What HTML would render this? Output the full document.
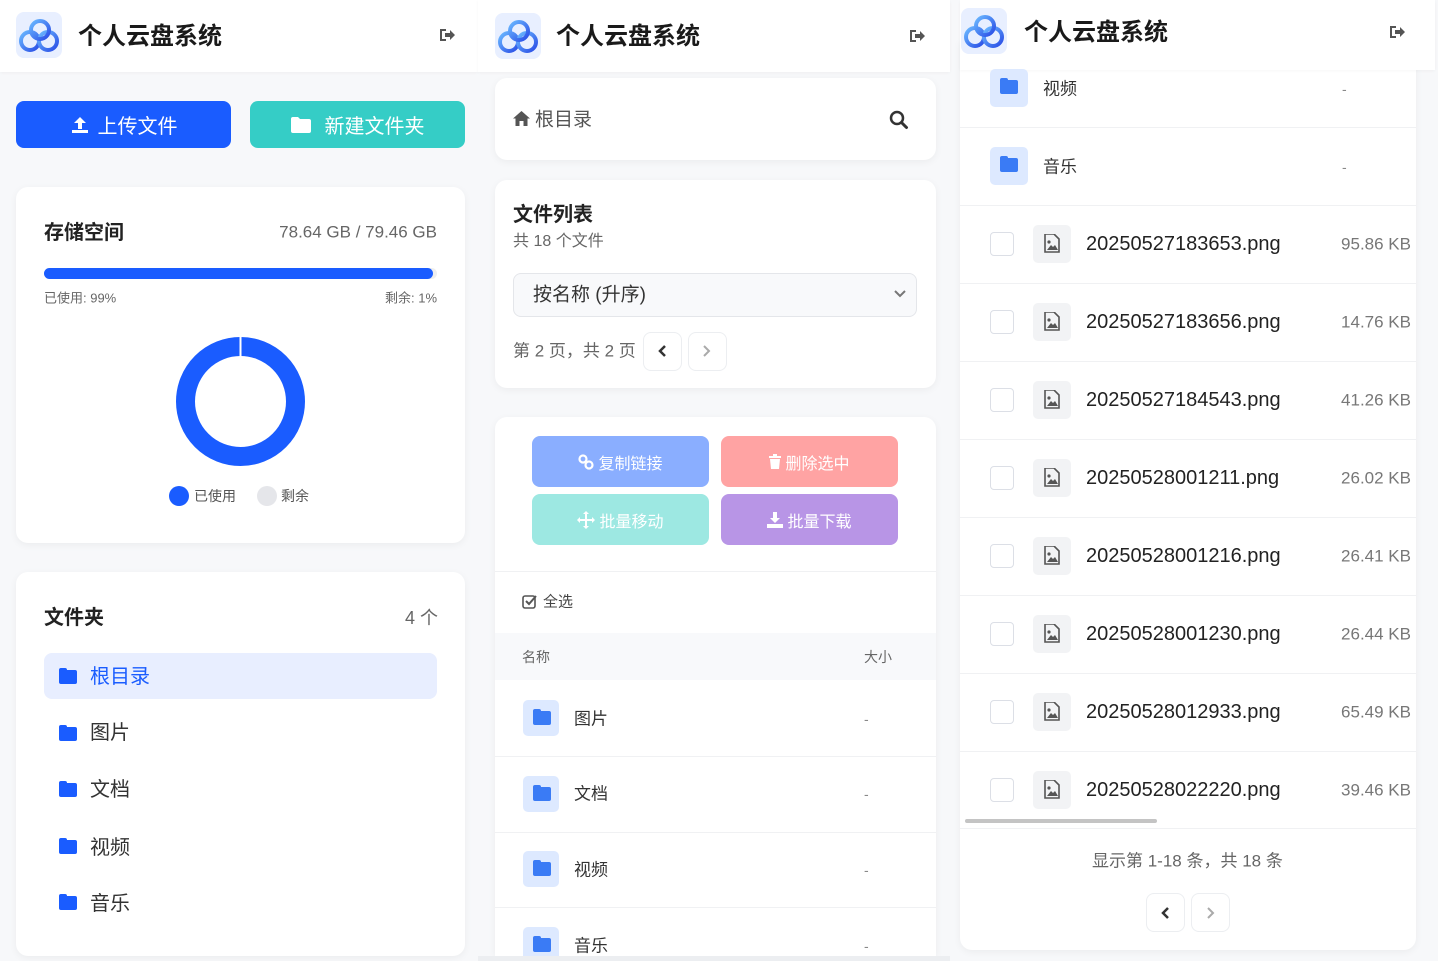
<!DOCTYPE html>
<html style="overflow:hidden;height:961px"><head><meta charset="utf-8"><style>
*{margin:0;padding:0;box-sizing:border-box}
body{width:1438px;height:961px;background:#f7f8fa;position:relative;overflow:hidden;font-family:"Liberation Sans","Noto Sans CJK SC",sans-serif;color:#222}
.a{position:absolute}
.t{position:absolute;transform:translateY(-50%);white-space:nowrap;line-height:1}
.card{position:absolute;background:#fff;border-radius:12px;box-shadow:0 2px 8px rgba(0,0,0,.05)}
.hdr{position:absolute;top:0;background:#fff;height:72px;box-shadow:0 1px 3px rgba(0,0,0,.04)}
.title{font-size:24px;font-weight:bold;color:#1a1a1a}
.btn{position:absolute;border-radius:8px;color:#fff;display:flex;align-items:center;justify-content:center;gap:8px}
.fi{position:absolute;width:36px;height:36px;background:#dde9ff;border-radius:5px}
.fi:after{content:"";position:absolute;left:10px;top:11px;width:18px;height:14px;background:#3a7bf5;border-radius:2px}
.fi:before{content:"";position:absolute;left:10px;top:9px;width:8px;height:4px;background:#3a7bf5;border-radius:2px 2px 0 0}
.ff{position:absolute;width:18px;height:14px;background:#1a5cff;border-radius:2px}
.ff:before{content:"";position:absolute;left:0;top:-2px;width:8px;height:4px;background:#1a5cff;border-radius:2px 2px 0 0}
.cb{position:absolute;width:24px;height:24px;border:1.5px solid #dcdfe6;border-radius:4px;background:#fff}
.ii{position:absolute;width:38px;height:38px;background:#f2f3f5;border-radius:5px}
.sep{position:absolute;height:1px;background:#f0f1f3}
.pb{position:absolute;width:39px;height:39px;border:1px solid #eceef1;border-radius:8px;background:#fff}
</style></head><body>

<svg width="0" height="0" style="position:absolute"><defs>
<linearGradient id="g" x1="0" y1="0" x2="1" y2="1"><stop offset="0" stop-color="#6ab8ff"/><stop offset="1" stop-color="#2a4de6"/></linearGradient>
<g id="logo"><rect width="46" height="46" rx="8" fill="#e8efff"/><g fill="none" stroke="url(#g)" stroke-width="4"><circle cx="14" cy="29" r="9"/><circle cx="32" cy="29" r="9"/><circle cx="24" cy="18" r="9"/></g></g>
<g id="out"><path d="M2 3h6v2H4v8h4v2H2z" fill="#555"/><path d="M7 7h5V4l5 5-5 5v-3H7z" fill="#555"/></g>
<g id="img"><path d="M1 0h9l5 5v13H1z" fill="none" stroke="#555" stroke-width="1.6"/><circle cx="5" cy="8" r="1.6" fill="#555"/><path d="M3 16l4-5 2 2 2-2 3 5z" fill="#555"/></g>
</defs></svg>

<!-- PANEL 1 -->
<div class="hdr" style="left:0;width:478px"></div>
<svg class="a" style="left:16px;top:12px" width="46" height="46"><use href="#logo"/></svg>
<div class="t title" style="left:78px;top:37px">个人云盘系统</div>
<svg class="a" style="left:438px;top:26px" width="18" height="18"><use href="#out"/></svg>

<div class="btn" style="left:16px;top:101px;width:215px;height:47px;background:#1a5cff;font-size:20px"><svg width="20" height="18"><path d="M10 1l6 6h-4v6H8V7H4z M2 14h16v3H2z" fill="#fff"/></svg>上传文件</div>
<div class="btn" style="left:250px;top:101px;width:215px;height:47px;background:#35cdc6;font-size:20px;gap:14px"><svg width="20" height="16"><path d="M0 2a2 2 0 0 1 2-2h5l2 2h9a2 2 0 0 1 2 2v10a2 2 0 0 1-2 2H2a2 2 0 0 1-2-2z" fill="#fff"/></svg>新建文件夹</div>

<div class="card" style="left:16px;top:187px;width:449px;height:356px"></div>
<div class="t" style="left:44px;top:233px;font-size:20px;font-weight:bold">存储空间</div>
<div class="t" style="right:1001px;top:232px;font-size:17px;color:#666">78.64 GB / 79.46 GB</div>
<div class="a" style="left:44px;top:268px;width:393px;height:11px;background:#eee;border-radius:6px"><div style="width:99%;height:100%;background:#1a5cff;border-radius:6px"></div></div>
<div class="t" style="left:44px;top:298px;font-size:13px;color:#666">已使用: 99%</div>
<div class="t" style="right:1001px;top:298px;font-size:13px;color:#666">剩余: 1%</div>
<svg class="a" style="left:176px;top:337px" width="129" height="129"><circle cx="64.5" cy="64.5" r="55" fill="none" stroke="#1a5cff" stroke-width="19"/><rect x="63.5" y="0" width="2" height="20" fill="#fff"/></svg>
<div class="a" style="left:169px;top:486px;width:20px;height:20px;border-radius:50%;background:#1a5cff"></div>
<div class="t" style="left:194px;top:496px;font-size:14px;color:#555">已使用</div>
<div class="a" style="left:257px;top:486px;width:20px;height:20px;border-radius:50%;background:#e5e6ea"></div>
<div class="t" style="left:281px;top:496px;font-size:14px;color:#555">剩余</div>

<div class="card" style="left:16px;top:572px;width:449px;height:384px"></div>
<div class="t" style="left:44px;top:618px;font-size:20px;font-weight:bold">文件夹</div>
<div class="t" style="right:1000px;top:618px;font-size:18px;color:#666">4 个</div>
<div class="a" style="left:44px;top:653px;width:393px;height:46px;background:#e8eeff;border-radius:8px"></div>
<div class="ff" style="left:59px;top:670px"></div><div class="t" style="left:90px;top:677px;font-size:20px;color:#1a5cff">根目录</div>
<div class="ff" style="left:59px;top:727px"></div><div class="t" style="left:90px;top:733px;font-size:20px;color:#333">图片</div>
<div class="ff" style="left:59px;top:783px"></div><div class="t" style="left:90px;top:790px;font-size:20px;color:#333">文档</div>
<div class="ff" style="left:59px;top:840px"></div><div class="t" style="left:90px;top:848px;font-size:20px;color:#333">视频</div>
<div class="ff" style="left:59px;top:896px"></div><div class="t" style="left:90px;top:904px;font-size:20px;color:#333">音乐</div>

<!-- PANEL 2 -->
<div class="hdr" style="left:478px;width:472px"></div>
<svg class="a" style="left:495px;top:13px" width="46" height="46"><use href="#logo"/></svg>
<div class="t title" style="left:556px;top:37px">个人云盘系统</div>
<svg class="a" style="left:908px;top:27px" width="18" height="18"><use href="#out"/></svg>

<div class="card" style="left:495px;top:78px;width:441px;height:82px"></div>
<svg class="a" style="left:513px;top:111px" width="17" height="15"><path d="M8.5 0L17 7.5h-2.5V15h-4v-5h-4v5h-4V7.5H0z" fill="#555"/></svg>
<div class="t" style="left:535px;top:120px;font-size:19px;color:#555">根目录</div>
<svg class="a" style="left:889px;top:110px" width="20" height="20"><circle cx="8" cy="8" r="6" fill="none" stroke="#333" stroke-width="2.5"/><path d="M12.5 12.5l5 5" stroke="#333" stroke-width="3" stroke-linecap="round"/></svg>

<div class="card" style="left:495px;top:180px;width:441px;height:208px"></div>
<div class="t" style="left:513px;top:215px;font-size:20px;font-weight:bold">文件列表</div>
<div class="t" style="left:513px;top:242px;font-size:16px;color:#666">共 18 个文件</div>
<div class="a" style="left:513px;top:273px;width:404px;height:44px;background:#f8f9fb;border:1px solid #e4e6ea;border-radius:8px"></div>
<div class="t" style="left:533px;top:295px;font-size:19px;color:#333">按名称 (升序)</div>
<svg class="a" style="left:893px;top:289px" width="14" height="10"><path d="M2 2l5 5 5-5" fill="none" stroke="#777" stroke-width="2"/></svg>
<div class="t" style="left:513px;top:351px;font-size:17px;color:#666">第 2 页，共 2 页</div>
<div class="pb" style="left:643px;top:332px"></div><svg class="a" style="left:657px;top:344px" width="10" height="14"><path d="M8 2L3 7l5 5" fill="none" stroke="#333" stroke-width="2.5"/></svg>
<div class="pb" style="left:688px;top:332px"></div><svg class="a" style="left:702px;top:344px" width="10" height="14"><path d="M2 2l5 5-5 5" fill="none" stroke="#aaa" stroke-width="2"/></svg>

<div class="card" style="left:495px;top:417px;width:441px;height:539px;border-radius:12px 12px 0 0"></div>
<div class="btn" style="left:532px;top:436px;width:177px;height:51px;background:#8aaeff;font-size:16px;gap:4px"><svg width="16" height="16"><circle cx="5" cy="5" r="3.5" fill="none" stroke="#fff" stroke-width="2.2"/><circle cx="11" cy="11" r="3.5" fill="none" stroke="#fff" stroke-width="2.2"/></svg>复制链接</div>
<div class="btn" style="left:721px;top:436px;width:177px;height:51px;background:#ffa3a3;font-size:16px;gap:4px"><svg width="12" height="15"><path d="M0 2h12v2H0zM4 0h4v2H4zM1 5h10l-1 10H2z" fill="#fff"/></svg>删除选中</div>
<div class="btn" style="left:532px;top:494px;width:177px;height:51px;background:#9de8e2;font-size:16px;gap:4px"><svg width="18" height="18"><path d="M9 0l3 3h-2v5h5V6l3 3-3 3v-2h-5v5h2l-3 3-3-3h2v-5H3v2L0 9l3-3v2h5V3H6z" fill="#fff"/></svg>批量移动</div>
<div class="btn" style="left:721px;top:494px;width:177px;height:51px;background:#b895e6;font-size:16px;gap:4px"><svg width="16" height="16"><path d="M6 0h4v6h3l-5 5-5-5h3zM0 12h16v4H0z" fill="#fff"/></svg>批量下载</div>
<div class="sep" style="left:495px;top:571px;width:441px"></div>
<svg class="a" style="left:522px;top:594px" width="16" height="16"><rect x="1" y="2" width="12" height="12" rx="2" fill="none" stroke="#555" stroke-width="1.6"/><path d="M4 7l3 3 7-8" fill="none" stroke="#555" stroke-width="2"/></svg>
<div class="t" style="left:543px;top:602px;font-size:15px;color:#444">全选</div>
<div class="a" style="left:495px;top:633px;width:441px;height:47px;background:#f8f9fb"></div>
<div class="t" style="left:522px;top:657px;font-size:14px;color:#666">名称</div>
<div class="t" style="left:864px;top:657px;font-size:14px;color:#666">大小</div>
<div class="fi" style="left:523px;top:700px"></div><div class="t" style="left:574px;top:719px;font-size:17px;color:#333">图片</div><div class="t" style="left:864px;top:719px;font-size:14px;color:#888">-</div>
<div class="sep" style="left:495px;top:756px;width:441px"></div>
<div class="fi" style="left:523px;top:776px"></div><div class="t" style="left:574px;top:794px;font-size:17px;color:#333">文档</div><div class="t" style="left:864px;top:794px;font-size:14px;color:#888">-</div>
<div class="sep" style="left:495px;top:832px;width:441px"></div>
<div class="fi" style="left:523px;top:851px"></div><div class="t" style="left:574px;top:870px;font-size:17px;color:#333">视频</div><div class="t" style="left:864px;top:870px;font-size:14px;color:#888">-</div>
<div class="sep" style="left:495px;top:907px;width:441px"></div>
<div class="fi" style="left:523px;top:927px"></div><div class="t" style="left:574px;top:946px;font-size:17px;color:#333">音乐</div><div class="t" style="left:864px;top:946px;font-size:14px;color:#888">-</div>
<div class="a" style="left:478px;top:956px;width:472px;height:5px;background:#eceef1"></div>

<!-- PANEL 3 -->
<div class="card" style="left:960px;top:40px;width:456px;height:910px;border-radius:0 0 12px 12px"></div>
<div class="hdr" style="left:960px;width:475px;height:70px"></div>
<svg class="a" style="left:961px;top:8px" width="48" height="48"><use href="#logo"/></svg>
<div class="t title" style="left:1024px;top:33px">个人云盘系统</div>
<svg class="a" style="left:1388px;top:23px" width="18" height="18"><use href="#out"/></svg>

<div class="fi" style="left:990px;top:69px;width:38px;height:38px"></div><div class="t" style="left:1043px;top:89px;font-size:17px;color:#333">视频</div><div class="t" style="left:1342px;top:89px;font-size:14px;color:#888">-</div>
<div class="sep" style="left:960px;top:127px;width:456px"></div>
<div class="fi" style="left:990px;top:147px;width:38px;height:38px"></div><div class="t" style="left:1043px;top:167px;font-size:17px;color:#333">音乐</div><div class="t" style="left:1342px;top:167px;font-size:14px;color:#888">-</div>
<div class="sep" style="left:960px;top:205px;width:456px"></div>

<div class="cb" style="left:990px;top:232px"></div><div class="ii" style="left:1033px;top:225px"></div><svg class="a" style="left:1044px;top:234px" width="17" height="20"><use href="#img"/></svg><div class="t" style="left:1086px;top:244px;font-size:20px;color:#222">20250527183653.png</div><div class="t" style="right:27px;top:244px;font-size:17px;color:#777">95.86 KB</div>
<div class="sep" style="left:960px;top:283px;width:456px"></div>
<div class="cb" style="left:990px;top:310px"></div><div class="ii" style="left:1033px;top:303px"></div><svg class="a" style="left:1044px;top:312px" width="17" height="20"><use href="#img"/></svg><div class="t" style="left:1086px;top:322px;font-size:20px;color:#222">20250527183656.png</div><div class="t" style="right:27px;top:322px;font-size:17px;color:#777">14.76 KB</div>
<div class="sep" style="left:960px;top:361px;width:456px"></div>
<div class="cb" style="left:990px;top:388px"></div><div class="ii" style="left:1033px;top:381px"></div><svg class="a" style="left:1044px;top:390px" width="17" height="20"><use href="#img"/></svg><div class="t" style="left:1086px;top:400px;font-size:20px;color:#222">20250527184543.png</div><div class="t" style="right:27px;top:400px;font-size:17px;color:#777">41.26 KB</div>
<div class="sep" style="left:960px;top:439px;width:456px"></div>
<div class="cb" style="left:990px;top:466px"></div><div class="ii" style="left:1033px;top:459px"></div><svg class="a" style="left:1044px;top:468px" width="17" height="20"><use href="#img"/></svg><div class="t" style="left:1086px;top:478px;font-size:20px;color:#222">20250528001211.png</div><div class="t" style="right:27px;top:478px;font-size:17px;color:#777">26.02 KB</div>
<div class="sep" style="left:960px;top:517px;width:456px"></div>
<div class="cb" style="left:990px;top:544px"></div><div class="ii" style="left:1033px;top:537px"></div><svg class="a" style="left:1044px;top:546px" width="17" height="20"><use href="#img"/></svg><div class="t" style="left:1086px;top:556px;font-size:20px;color:#222">20250528001216.png</div><div class="t" style="right:27px;top:556px;font-size:17px;color:#777">26.41 KB</div>
<div class="sep" style="left:960px;top:595px;width:456px"></div>
<div class="cb" style="left:990px;top:622px"></div><div class="ii" style="left:1033px;top:615px"></div><svg class="a" style="left:1044px;top:624px" width="17" height="20"><use href="#img"/></svg><div class="t" style="left:1086px;top:634px;font-size:20px;color:#222">20250528001230.png</div><div class="t" style="right:27px;top:634px;font-size:17px;color:#777">26.44 KB</div>
<div class="sep" style="left:960px;top:673px;width:456px"></div>
<div class="cb" style="left:990px;top:700px"></div><div class="ii" style="left:1033px;top:693px"></div><svg class="a" style="left:1044px;top:702px" width="17" height="20"><use href="#img"/></svg><div class="t" style="left:1086px;top:712px;font-size:20px;color:#222">20250528012933.png</div><div class="t" style="right:27px;top:712px;font-size:17px;color:#777">65.49 KB</div>
<div class="sep" style="left:960px;top:751px;width:456px"></div>
<div class="cb" style="left:990px;top:778px"></div><div class="ii" style="left:1033px;top:771px"></div><svg class="a" style="left:1044px;top:780px" width="17" height="20"><use href="#img"/></svg><div class="t" style="left:1086px;top:790px;font-size:20px;color:#222">20250528022220.png</div><div class="t" style="right:27px;top:790px;font-size:17px;color:#777">39.46 KB</div>
<div class="a" style="left:965px;top:819px;width:192px;height:4px;background:#c4c4c4;border-radius:2px"></div>
<div class="sep" style="left:960px;top:828px;width:456px"></div>
<div class="t" style="left:1092px;top:861px;font-size:17px;color:#666">显示第 1-18 条，共 18 条</div>
<div class="pb" style="left:1146px;top:893px"></div><svg class="a" style="left:1160px;top:906px" width="10" height="14"><path d="M8 2L3 7l5 5" fill="none" stroke="#333" stroke-width="2.5"/></svg>
<div class="pb" style="left:1191px;top:893px"></div><svg class="a" style="left:1206px;top:906px" width="10" height="14"><path d="M2 2l5 5-5 5" fill="none" stroke="#aaa" stroke-width="2"/></svg>
</body></html>
